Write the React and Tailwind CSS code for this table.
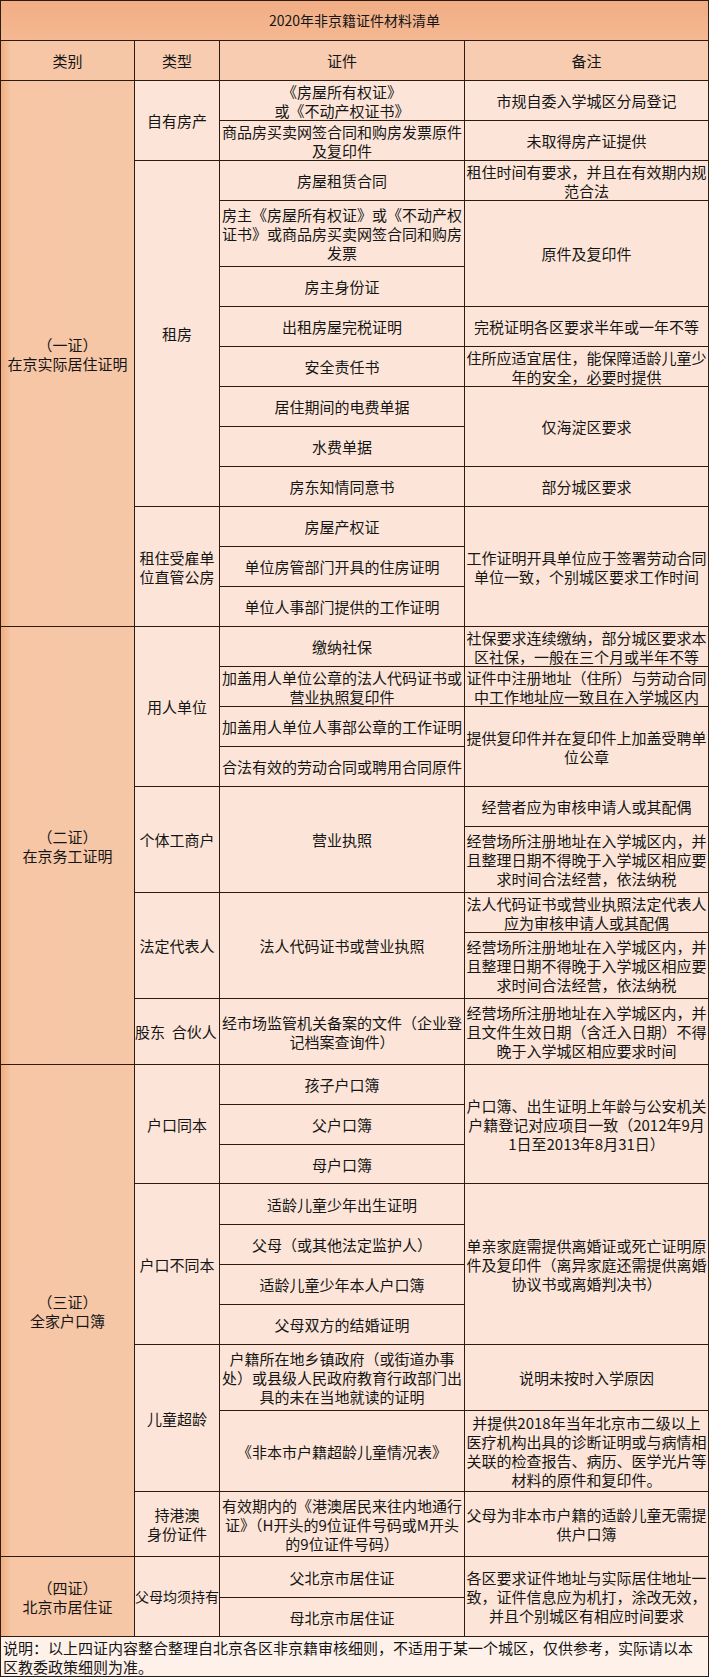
import React from "react";

function C({ span = "", bg = "bg-[#fce5d8]", className = "", children }) {
  return (
    <div
      className={`${span} ${bg} flex items-center justify-center text-center px-px leading-[19px] ${className}`}
    >
      <div>{children}</div>
    </div>
  );
}

const L = "bg-[linear-gradient(to_right,#f1ad82,#f6c6a5_10px,#f6c7a7)]";

export default function App() {
  return (
    <div className="w-[709px] bg-white font-['Noto_Sans_CJK_SC',sans-serif] text-[15px] text-[#151515]">
      <div className="grid grid-cols-[133px_84px_244px_243px] grid-rows-[39px_39px_39px_39px_39px_65px_39px_39px_39px_39px_39px_39px_39px_39px_39px_39px_39px_39px_39px_39px_65px_39px_65px_65px_39px_39px_38px_40px_39px_39px_39px_65px_80px_64px_40px_38px_39px] gap-px bg-[#2e1b10] p-px">
        {/* title */}
        <C span="col-span-4" bg="bg-[linear-gradient(to_bottom,#f2ad84,#f4b892)]" className="text-[14px]">
          2020年非京籍证件材料清单
        </C>
        {/* header */}
        <C bg={L}>类别</C>
        <C bg="bg-[#f7ccb0]">类型</C>
        <C bg="bg-[#f7ccb0]">证件</C>
        <C bg="bg-[#f7ccb0]">备注</C>

        {/* 一证 */}
        <C span="row-span-13" bg={L}>
          （一证）
          <br />
          在京实际居住证明
        </C>
        <C span="row-span-2">自有房产</C>
        <C>
          《房屋所有权证》
          <br />
          或《不动产权证书》
        </C>
        <C>市规自委入学城区分局登记</C>
        <C>商品房买卖网签合同和购房发票原件及复印件</C>
        <C>未取得房产证提供</C>

        <C span="row-span-8">租房</C>
        <C>房屋租赁合同</C>
        <C>租住时间有要求，并且在有效期内规范合法</C>
        <C>房主《房屋所有权证》或《不动产权证书》或商品房买卖网签合同和购房发票</C>
        <C span="row-span-2">原件及复印件</C>
        <C>房主身份证</C>
        <C>出租房屋完税证明</C>
        <C>完税证明各区要求半年或一年不等</C>
        <C>安全责任书</C>
        <C>住所应适宜居住，能保障适龄儿童少年的安全，必要时提供</C>
        <C>居住期间的电费单据</C>
        <C span="row-span-2">仅海淀区要求</C>
        <C>水费单据</C>
        <C>房东知情同意书</C>
        <C>部分城区要求</C>

        <C span="row-span-3">
          租住受雇单
          <br />
          位直管公房
        </C>
        <C>房屋产权证</C>
        <C span="row-span-3">工作证明开具单位应于签署劳动合同单位一致，个别城区要求工作时间</C>
        <C>单位房管部门开具的住房证明</C>
        <C>单位人事部门提供的工作证明</C>

        {/* 二证 */}
        <C span="row-span-9" bg={L}>
          （二证）
          <br />
          在京务工证明
        </C>
        <C span="row-span-4">用人单位</C>
        <C>缴纳社保</C>
        <C>社保要求连续缴纳，部分城区要求本区社保，一般在三个月或半年不等</C>
        <C>加盖用人单位公章的法人代码证书或营业执照复印件</C>
        <C>证件中注册地址（住所）与劳动合同中工作地址应一致且在入学城区内</C>
        <C>加盖用人单位人事部公章的工作证明</C>
        <C span="row-span-2">提供复印件并在复印件上加盖受聘单位公章</C>
        <C>合法有效的劳动合同或聘用合同原件</C>

        <C span="row-span-2">个体工商户</C>
        <C span="row-span-2">营业执照</C>
        <C>经营者应为审核申请人或其配偶</C>
        <C>经营场所注册地址在入学城区内，并且整理日期不得晚于入学城区相应要求时间合法经营，依法纳税</C>

        <C span="row-span-2">法定代表人</C>
        <C span="row-span-2">法人代码证书或营业执照</C>
        <C>法人代码证书或营业执照法定代表人应为审核申请人或其配偶</C>
        <C>经营场所注册地址在入学城区内，并且整理日期不得晚于入学城区相应要求时间合法经营，依法纳税</C>

        <C className="!justify-start whitespace-pre !px-0">股东  合伙人</C>
        <C>经市场监管机关备案的文件（企业登记档案查询件）</C>
        <C>经营场所注册地址在入学城区内，并且文件生效日期（含迁入日期）不得晚于入学城区相应要求时间</C>

        {/* 三证 */}
        <C span="row-span-10" bg={L}>
          （三证）
          <br />
          全家户口簿
        </C>
        <C span="row-span-3">户口同本</C>
        <C>孩子户口簿</C>
        <C span="row-span-3">户口簿、出生证明上年龄与公安机关户籍登记对应项目一致（2012年9月1日至2013年8月31日）</C>
        <C>父户口簿</C>
        <C>母户口簿</C>

        <C span="row-span-4">户口不同本</C>
        <C>适龄儿童少年出生证明</C>
        <C span="row-span-4">单亲家庭需提供离婚证或死亡证明原件及复印件（离异家庭还需提供离婚协议书或离婚判决书）</C>
        <C>父母（或其他法定监护人）</C>
        <C>适龄儿童少年本人户口簿</C>
        <C>父母双方的结婚证明</C>

        <C span="row-span-2">儿童超龄</C>
        <C>户籍所在地乡镇政府（或街道办事处）或县级人民政府教育行政部门出具的未在当地就读的证明</C>
        <C>说明未按时入学原因</C>
        <C>《非本市户籍超龄儿童情况表》</C>
        <C>并提供2018年当年北京市二级以上医疗机构出具的诊断证明或与病情相关联的检查报告、病历、医学光片等材料的原件和复印件。</C>

        <C>
          持港澳
          <br />
          身份证件
        </C>
        <C>有效期内的《港澳居民来往内地通行证》（H开头的9位证件号码或M开头的9位证件号码）</C>
        <C>父母为非本市户籍的适龄儿童无需提供户口簿</C>

        {/* 四证 */}
        <C span="row-span-2" bg={L}>
          （四证）
          <br />
          北京市居住证
        </C>
        <C span="row-span-2" className="!justify-start whitespace-nowrap !px-0 text-[14px]">
          父母均须持有
        </C>
        <C>父北京市居住证</C>
        <C span="row-span-2">各区要求证件地址与实际居住地址一致，证件信息应为机打，涂改无效，并且个别城区有相应时间要求</C>
        <C>母北京市居住证</C>

        {/* footer */}
        <C span="col-span-4" bg="bg-[#fdf1ea]" className="!justify-start !text-left !px-[2px]">
          说明：以上四证内容整合整理自北京各区非京籍审核细则，不适用于某一个城区，仅供参考，实际请以本区教委政策细则为准。
        </C>
      </div>
    </div>
  );
}
